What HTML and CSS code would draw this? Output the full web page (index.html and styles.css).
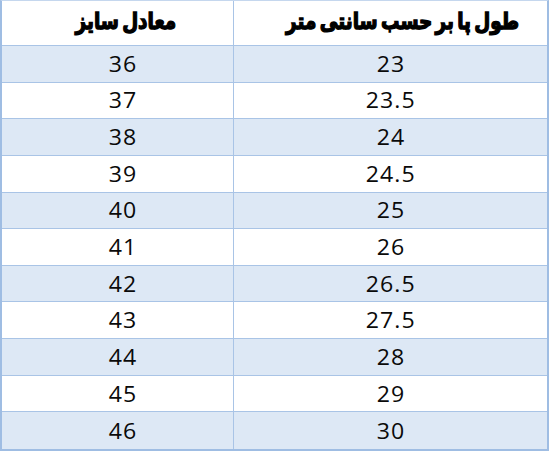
FILE: index.html
```html
<!DOCTYPE html>
<html lang="fa" dir="rtl">
<head>
<meta charset="utf-8">
<title>جدول سایز</title>
<link rel="stylesheet" href="styles.css">
</head>
<body>
<div class="size-table">
  <div class="cell head len"><span class="title">طول پا بر حسب سانتی متر</span></div>
  <div class="cell head size"><span class="title">معادل سایز</span></div>

  <div class="cell len odd"><span class="num">23</span></div><div class="cell size odd"><span class="num">36</span></div>
  <div class="cell len"><span class="num">23.5</span></div><div class="cell size"><span class="num">37</span></div>
  <div class="cell len odd"><span class="num">24</span></div><div class="cell size odd"><span class="num">38</span></div>
  <div class="cell len"><span class="num">24.5</span></div><div class="cell size"><span class="num">39</span></div>
  <div class="cell len odd"><span class="num">25</span></div><div class="cell size odd"><span class="num">40</span></div>
  <div class="cell len"><span class="num">26</span></div><div class="cell size"><span class="num">41</span></div>
  <div class="cell len odd"><span class="num">26.5</span></div><div class="cell size odd"><span class="num">42</span></div>
  <div class="cell len"><span class="num">27.5</span></div><div class="cell size"><span class="num">43</span></div>
  <div class="cell len odd"><span class="num">28</span></div><div class="cell size odd"><span class="num">44</span></div>
  <div class="cell len"><span class="num">29</span></div><div class="cell size"><span class="num">45</span></div>
  <div class="cell len odd"><span class="num">30</span></div><div class="cell size odd"><span class="num">46</span></div>
</div>
</body>
</html>
```

FILE: styles.css
```css
html, body {
  margin: 0;
  padding: 0;
  background: #ffffff;
}

.size-table {
  box-sizing: border-box;
  width: 549px;
  height: 451px;
  display: grid;
  grid-template-columns: 314px 1fr;
  grid-template-rows: 45px repeat(11, 1fr);
  border-top: 1px solid #c5d7ee;
  border-left: 2px solid #9fbde3;
  border-right: 2px solid #9fbde3;
  border-bottom: 2px solid #9fbde3;
  font-family: "Open Sans", "DejaVu Sans", sans-serif;
  color: #111111;
}

.cell {
  box-sizing: border-box;
  display: flex;
  align-items: center;
  justify-content: center;
  border-bottom: 1px solid #a9c4e6;
}

.cell:nth-last-child(-n+2) {
  border-bottom: none;
}

.len {
  border-left: 1px solid #a9c4e6;
}

.size {
  padding-left: 10px;
}

.head {
  font-family: "DejaVu Sans", sans-serif;
  font-weight: bold;
  font-size: 23px;
  color: #000000;
  padding-bottom: 4px;
}

.title {
  display: inline-block;
  word-spacing: -4px;
  -webkit-text-stroke: 1.4px #000000;
  transform: scaleX(0.8);
  white-space: nowrap;
}

.head.len {
  padding-left: 24px;
}

.head.size {
  padding-left: 16px;
}

.odd {
  background: #dde8f5;
}

.num {
  display: inline-block;
  font-size: 21px;
  font-weight: 500;
  letter-spacing: 1px;
  transform: scaleX(1.1);
  direction: ltr;
  color: #0a0a0a;
}
```
